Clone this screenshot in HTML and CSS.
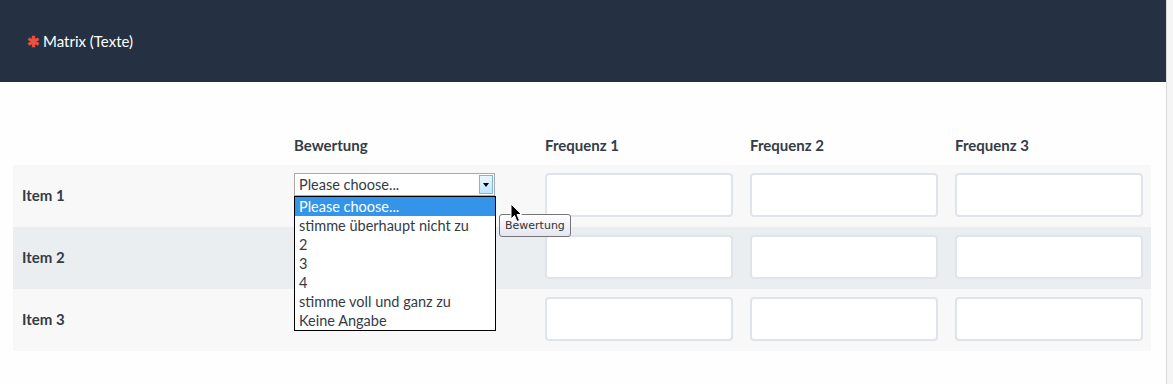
FILE: index.html
```html
<!DOCTYPE html>
<html lang="de">

<head>
    <meta charset="UTF-8">
    <title>Matrix (Texte)</title>
    <link rel="stylesheet" href="styles.css">
</head>

<body>
    <div class="page">
        <div class="main">
            <div class="question-header">
                <span class="required">&#10033;</span>
                <span class="question-title">Matrix (Texte)</span>
            </div>

            <div class="matrix">
                <div class="matrix-row head-row">
                    <div class="cell"></div>
                    <div class="cell">Bewertung</div>
                    <div class="cell">Frequenz 1</div>
                    <div class="cell">Frequenz 2</div>
                    <div class="cell">Frequenz 3</div>
                </div>

                <div class="matrix-row odd">
                    <div class="cell item">Item 1</div>
                    <div class="cell select-cell">
                        <div class="fake-select">
                            <span class="select-value">Please choose...</span>
                            <span class="select-arrow"></span>
                        </div>
                        <ul class="select-list">
                            <li class="active">Please choose...</li>
                            <li>stimme überhaupt nicht zu</li>
                            <li>2</li>
                            <li>3</li>
                            <li>4</li>
                            <li>stimme voll und ganz zu</li>
                            <li>Keine Angabe</li>
                        </ul>
                        <div class="tooltip">Bewertung</div>
                        <svg class="cursor" width="13" height="20" viewBox="0 0 13 20">
                            <path d="M1 1 L1 16 L4.5 12.5 L7 18.5 L9.5 17.5 L7 11.5 L11.5 11.5 Z" fill="#000" stroke="#fff" stroke-width="1"/>
                        </svg>
                    </div>
                    <div class="cell input-cell"><input type="text" class="text-input"></div>
                    <div class="cell input-cell"><input type="text" class="text-input"></div>
                    <div class="cell input-cell"><input type="text" class="text-input"></div>
                </div>

                <div class="matrix-row even">
                    <div class="cell item">Item 2</div>
                    <div class="cell"></div>
                    <div class="cell input-cell"><input type="text" class="text-input"></div>
                    <div class="cell input-cell"><input type="text" class="text-input"></div>
                    <div class="cell input-cell"><input type="text" class="text-input"></div>
                </div>

                <div class="matrix-row odd">
                    <div class="cell item">Item 3</div>
                    <div class="cell"></div>
                    <div class="cell input-cell"><input type="text" class="text-input"></div>
                    <div class="cell input-cell"><input type="text" class="text-input"></div>
                    <div class="cell input-cell"><input type="text" class="text-input"></div>
                </div>
            </div>
        </div>
        <div class="scrollbar"></div>
    </div>
</body>

</html>
```

FILE: styles.css
```css
body {
    margin: 0;
    padding: 0;
    font-family: Lato, "Open Sans", sans-serif;
    background-color: #fefefe;
    color: #333c46;
}

.page {
    display: flex;
    height: 384px;
    overflow: hidden;
}

.main {
    flex: 1;
}

.scrollbar {
    width: 6px;
    border-left: 1px solid #d9d9d9;
    background-color: #f5f5f5;
}

.question-header {
    height: 82px;
    background-color: #253142;
    display: flex;
    align-items: center;
    padding-left: 27px;
}

.required {
    color: #e9523f;
    font-size: 15px;
    font-weight: bold;
    margin-right: 3px;
}

.question-title {
    color: #fff;
    font-size: 15px;
}

.matrix {
    margin: 46px 15px 0 13px;
}

.matrix-row {
    display: grid;
    grid-template-columns: 272px 251px 205px 205px 205px;
    align-items: center;
}

.cell {
    padding: 0 9px;
}

.head-row {
    height: 37px;
    font-weight: bold;
    font-size: 15px;
}

.head-row .cell {
    padding-bottom: 4px;
}

.odd,
.even {
    height: 62px;
}

.odd {
    background-color: #f8f8f8;
}

.even {
    background-color: #ebeef0;
}

.item {
    font-weight: bold;
    font-size: 15px;
    padding-bottom: 3px;
}

.input-cell {
    align-self: start;
    padding-top: 8px;
}

.text-input {
    display: block;
    box-sizing: border-box;
    width: 188px;
    height: 44px;
    border: 2px solid #dfe4ea;
    border-radius: 4px;
    background-color: #fff;
    margin: 0;
}

.select-cell {
    position: relative;
    align-self: start;
    padding-top: 8px;
}

.fake-select {
    box-sizing: border-box;
    width: 201px;
    height: 23px;
    border: 1px solid #a9a9a9;
    background-color: #fff;
    display: flex;
    align-items: center;
    justify-content: space-between;
    font-size: 14.5px;
}

.select-value {
    padding-left: 4px;
}

.select-arrow {
    width: 14px;
    height: 19px;
    margin-right: 1px;
    border: 1px solid #7eb4ea;
    box-sizing: border-box;
    background: linear-gradient(#eaf6fd, #bee6fd);
    position: relative;
}

.select-arrow::after {
    content: "";
    position: absolute;
    left: 3px;
    top: 7px;
    border-left: 3.5px solid transparent;
    border-right: 3.5px solid transparent;
    border-top: 4px solid #000;
}

.select-list {
    position: absolute;
    left: 9px;
    top: 31px;
    width: 202px;
    box-sizing: border-box;
    margin: 0;
    padding: 0;
    list-style: none;
    border: 1px solid #000;
    background-color: #fff;
    font-size: 14.5px;
    z-index: 2;
}

.select-list li {
    height: 19px;
    line-height: 19px;
    padding-left: 4px;
}

.select-list li.active {
    background-color: #3394ea;
    color: #fff;
}

.tooltip {
    position: absolute;
    left: 214px;
    top: 49px;
    height: 23px;
    padding: 0 5px;
    box-sizing: border-box;
    border: 1px solid #767676;
    border-radius: 3px;
    background: linear-gradient(#fff, #e4e5f0);
    font-family: "DejaVu Sans", sans-serif;
    font-size: 11px;
    line-height: 21px;
    color: #333;
    z-index: 3;
}

.cursor {
    position: absolute;
    left: 225px;
    top: 38px;
    z-index: 4;
}
```
